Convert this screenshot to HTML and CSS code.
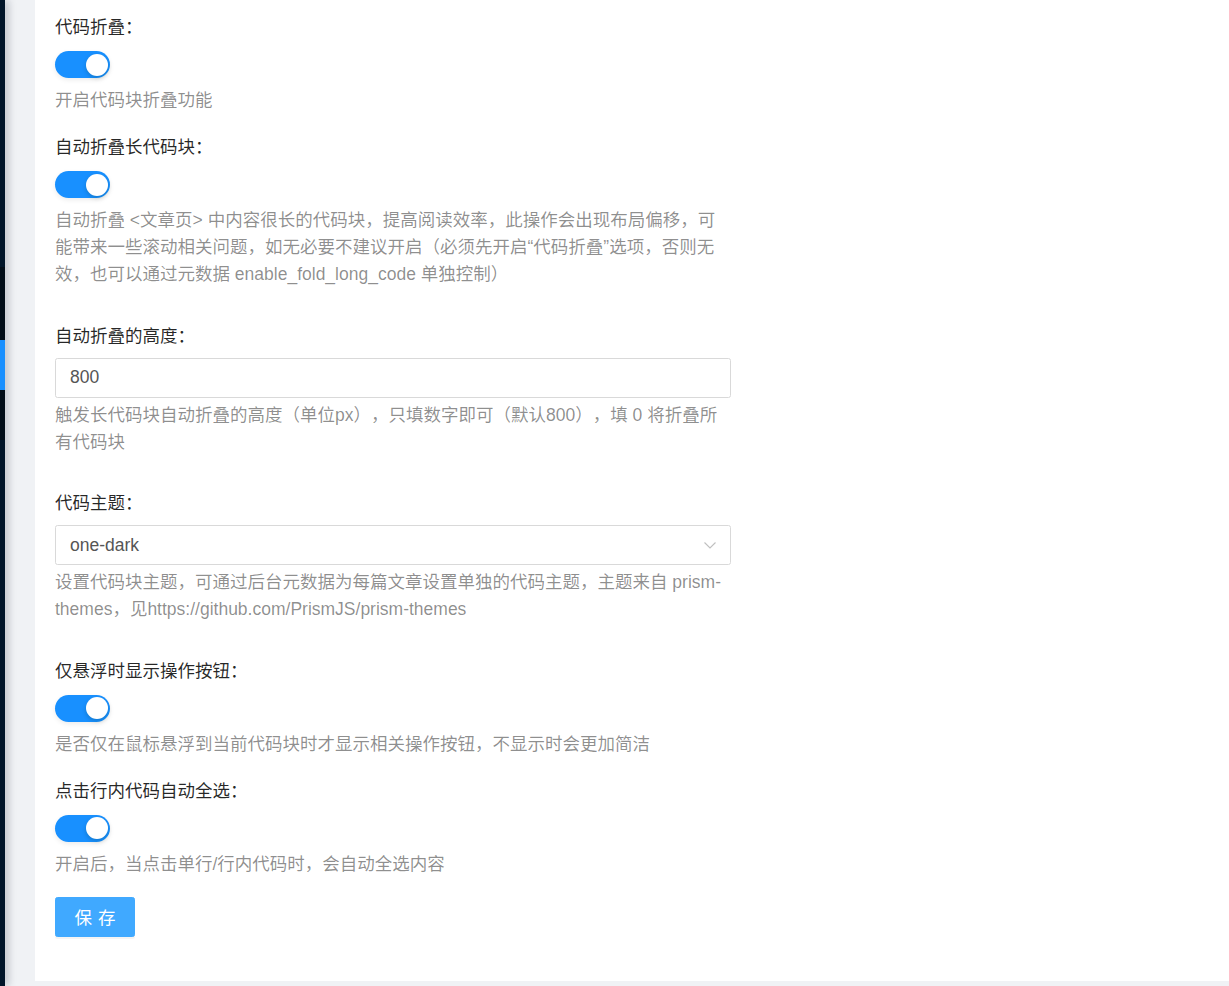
FILE: index.html
```html
<!DOCTYPE html>
<html lang="zh-CN">
<head>
<meta charset="utf-8">
<title>代码设置</title>
<link rel="stylesheet" href="styles.css">
</head>
<body>
<div class="layout">
  <aside class="sidebar">
    <div class="nav-top"></div>
    <div class="nav-sub"></div>
    <div class="nav-active"></div>
    <div class="nav-sub nav-sub--after"></div>
    <div class="nav-rest"></div>
  </aside>
  <main class="main">
    <section class="card">
      <form class="form">
        <div class="field">
          <div class="label">代码折叠：</div>
          <div class="switch"><span class="knob"></span></div>
          <div class="help">开启代码块折叠功能</div>
        </div>
        <div class="field field--wide">
          <div class="label">自动折叠长代码块：</div>
          <div class="switch"><span class="knob"></span></div>
          <div class="help">自动折叠 &lt;文章页&gt; 中内容很长的代码块，提高阅读效率，此操作会出现布局偏移，可能带来一些滚动相关问题，如无必要不建议开启（必须先开启“代码折叠”选项，否则无效，也可以通过元数据 enable_fold_long_code 单独控制）</div>
        </div>
        <div class="field field--wide">
          <div class="label label--input">自动折叠的高度：</div>
          <div class="input">800</div>
          <div class="help help--tight">触发长代码块自动折叠的高度（单位px），只填数字即可（默认800），填 0 将折叠所有代码块</div>
        </div>
        <div class="field field--wide">
          <div class="label label--input">代码主题：</div>
          <div class="input select">
            <span>one-dark</span>
            <svg class="arrow" width="14" height="14" viewBox="0 0 14 14"><polyline points="1.5,4.5 7,10 12.5,4.5" fill="none" stroke="#bfbfbf" stroke-width="1.1"/></svg>
          </div>
          <div class="help help--tight">设置代码块主题，可通过后台元数据为每篇文章设置单独的代码主题，主题来自 prism-themes，见https://github.com/PrismJS/prism-themes</div>
        </div>
        <div class="field">
          <div class="label">仅悬浮时显示操作按钮：</div>
          <div class="switch"><span class="knob"></span></div>
          <div class="help">是否仅在鼠标悬浮到当前代码块时才显示相关操作按钮，不显示时会更加简洁</div>
        </div>
        <div class="field">
          <div class="label">点击行内代码自动全选：</div>
          <div class="switch"><span class="knob"></span></div>
          <div class="help">开启后，当点击单行/行内代码时，会自动全选内容</div>
        </div>
        <button type="button" class="btn">保存</button>
      </form>
    </section>
  </main>
</div>
</body>
</html>
```
FILE: styles.css
```css
* { box-sizing: border-box; }
html, body { margin: 0; padding: 0; }
body {
  width: 1229px;
  height: 986px;
  overflow: hidden;
  background: #f0f2f5;
  font-family: "Liberation Sans", "Noto Sans CJK SC", sans-serif;
  font-size: 17.5px;
  color: rgba(0, 0, 0, 0.85);
  text-spacing-trim: space-all;
}
.layout {
  display: flex;
  height: 986px;
}
.sidebar {
  width: 5px;
  flex: none;
  display: flex;
  flex-direction: column;
  position: relative;
  z-index: 2;
  box-shadow: 2px 0 8px rgba(0, 21, 41, 0.35);
}
.nav-top { height: 267px; background: #001529; }
.nav-sub { height: 73px; background: #000c17; }
.nav-active { height: 50px; background: #1890ff; }
.nav-sub--after { height: 50px; }
.nav-rest { flex: 1; background: #001529; }
.main {
  flex: 1;
  padding-left: 30px;
  background: #f0f2f5;
}
.card {
  background: #fff;
  padding: 13px 20px 44px;
}
.form { width: 676px; }
.field { margin-bottom: 19px; }
.field--wide { margin-bottom: 33.5px; }
.label {
  height: 28px;
  line-height: 28px;
  color: rgba(0, 0, 0, 0.85);
  margin-bottom: 10px;
}
.label--input { margin-bottom: 8px; }
.switch {
  position: relative;
  width: 55px;
  height: 27px;
  border-radius: 14px;
  background: #1890ff;
  margin-bottom: 9px;
  box-shadow: 0 2px 5px rgba(0, 0, 0, 0.08);
}
.knob {
  position: absolute;
  top: 2.5px;
  right: 2.5px;
  width: 22px;
  height: 22px;
  border-radius: 50%;
  background: #fff;
  box-shadow: 0 2px 4px rgba(0, 35, 11, 0.2);
}
.help {
  line-height: 27px;
  color: rgba(0, 0, 0, 0.45);
}
.help--tight { margin-top: 4px; }
.input {
  height: 40px;
  border: 1px solid #d9d9d9;
  border-radius: 2.5px;
  padding: 0 14px;
  display: flex;
  align-items: center;
  line-height: 27px;
  color: #555;
}
.select {
  justify-content: space-between;
  padding-right: 13px;
}
.arrow { display: block; }
.btn {
  display: block;
  width: 80px;
  height: 40px;
  padding: 0;
  border: 1px solid #40a9ff;
  border-radius: 2.5px;
  background: #40a9ff;
  color: #fff;
  font-family: "Noto Sans CJK SC", sans-serif;
  font-size: 17.5px;
  letter-spacing: 0.34em;
  text-indent: 0.34em;
  white-space: nowrap;
  text-align: center;
  box-shadow: 0 2px 0 rgba(0, 0, 0, 0.045);
  cursor: pointer;
}
```
